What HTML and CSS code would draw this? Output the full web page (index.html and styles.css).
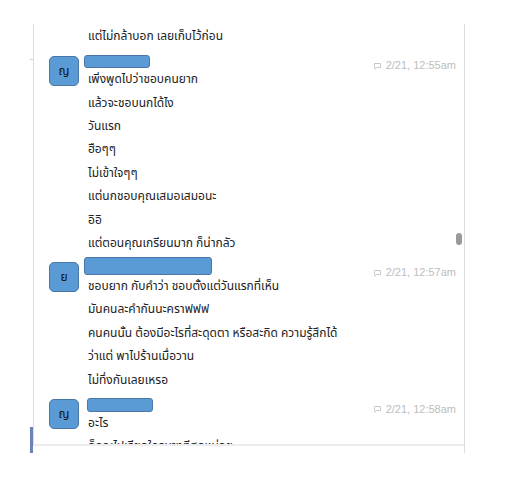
FILE: index.html
```html
<!DOCTYPE html>
<html lang="th">
<head>
<meta charset="utf-8">
<link rel="stylesheet" href="styles.css">
</head>
<body>
<div class="page">
  <div class="rail"><span class="tick"></span><span class="marker"></span></div>
  <div class="panel">
    <div class="frame">
      <div class="feed">
        <p class="msg">แต่ไม่กล้าบอก เลยเก็บไว้ก่อน</p>

        <div class="group">
          <div class="avatar">ญ</div>
          <div class="body">
            <div class="head">
              <span class="name n1"></span>
              <span class="time"><svg class="ico" width="7" height="7" viewBox="0 0 7 7"><path d="M0.5 0.5H6.5V4.5H2.5L1 6.3V4.5H0.5Z" fill="none" stroke="#c8c8c8" stroke-width="1"/></svg>2/21, 12:55am</span>
            </div>
            <p class="msg">เพิ่งพูดไปว่าชอบคนยาก</p>
            <p class="msg">แล้วจะชอบนกได้ไง</p>
            <p class="msg">วันแรก</p>
            <p class="msg">ฮือๆๆ</p>
            <p class="msg">ไม่เข้าใจๆๆ</p>
            <p class="msg">แต่นกชอบคุณเสมอเสมอนะ</p>
            <p class="msg">อิอิ</p>
            <p class="msg">แต่ตอนคุณเกรียนมาก ก็น่ากลัว</p>
          </div>
        </div>

        <div class="group">
          <div class="avatar">ย</div>
          <div class="body">
            <div class="head">
              <span class="name n2"></span>
              <span class="time"><svg class="ico" width="7" height="7" viewBox="0 0 7 7"><path d="M0.5 0.5H6.5V4.5H2.5L1 6.3V4.5H0.5Z" fill="none" stroke="#c8c8c8" stroke-width="1"/></svg>2/21, 12:57am</span>
            </div>
            <p class="msg">ชอบยาก กับคำว่า ชอบตั้งแต่วันแรกที่เห็น</p>
            <p class="msg">มันคนละคำกันนะคราฟฟฟ</p>
            <p class="msg">คนคนนั้น ต้องมีอะไรที่สะดุดตา หรือสะกิด ความรู้สึกได้</p>
            <p class="msg">ว่าแต่ พาไปร้านเมื่อวาน</p>
            <p class="msg">ไม่ทึ่งกันเลยเหรอ</p>
          </div>
        </div>

        <div class="group">
          <div class="avatar">ญ</div>
          <div class="body">
            <div class="head">
              <span class="name n3"></span>
              <span class="time"><svg class="ico" width="7" height="7" viewBox="0 0 7 7"><path d="M0.5 0.5H6.5V4.5H2.5L1 6.3V4.5H0.5Z" fill="none" stroke="#c8c8c8" stroke-width="1"/></svg>2/21, 12:58am</span>
            </div>
            <p class="msg">อะไร</p>
            <p class="msg">ก็คุณไปเรียกใครบางทีสุดหน่อย</p>
          </div>
        </div>
      </div>
      <div class="thumb"></div>
    </div>
  </div>
</div>
</body>
</html>
```

FILE: styles.css
```css
html, body {
  margin: 0;
  padding: 0;
  background: #ffffff;
}

body {
  font-family: Tahoma, "Noto Sans Thai", "Noto Sans", "DejaVu Sans", sans-serif;
  font-size: 12px;
  color: #222;
}

.page {
  display: flex;
  padding-top: 24px;
  padding-left: 30px;
}

.rail {
  width: 3px;
  height: 429px;
  display: flex;
  flex-direction: column;
}

.tick {
  display: block;
  margin-top: 35px;
  height: 1px;
  background: #cfcfcf;
}

.marker {
  display: block;
  margin-top: auto;
  height: 26px;
  background: #6b84b5;
}

.panel {
  width: 431px;
  height: 429px;
  border-right: 1px solid #dcdcdc;
}

.frame {
  position: relative;
  height: 420px;
  border-left: 1px solid #dcdcdc;
  border-bottom: 2px solid #ececec;
  overflow: hidden;
}

.feed {
  padding-top: 1.3px;
}

.msg {
  margin: 0 0 0 54px;
  height: 23.4px;
  line-height: 23.4px;
  white-space: nowrap;
}

.group .msg {
  margin-left: 0;
}

.group {
  display: flex;
  align-items: flex-start;
}

.avatar {
  box-sizing: border-box;
  width: 30px;
  height: 30px;
  margin-left: 15px;
  margin-top: 7px;
  background: #5b9bd5;
  border: 1px solid #4a77a6;
  border-radius: 5px;
  display: flex;
  align-items: center;
  justify-content: center;
  font-size: 12px;
  color: #111;
}

.body {
  flex: 1;
  margin-left: 9px;
  padding-right: 8px;
}

.head {
  height: 19.6px;
  display: flex;
  align-items: flex-end;
  justify-content: space-between;
}

.name {
  display: block;
  box-sizing: border-box;
  background: #5b9bd5;
  border: 1px solid #4a77a6;
  border-radius: 3px;
}

.n1 { width: 66px; height: 13px; margin-left: -4px; margin-bottom: 0; }
.n2 { width: 128px; height: 18px; margin-left: -4px; margin-bottom: 0; }
.n3 { width: 66px; height: 14px; margin-left: -1px; margin-bottom: 0; }

.time {
  display: flex;
  align-items: center;
  font-family: "Liberation Sans", Arial, sans-serif;
  font-size: 11px;
  line-height: 12px;
  color: #bdbdbd;
  margin-bottom: -3px;
}

.ico {
  margin-right: 5px;
  margin-top: 2px;
}

.thumb {
  position: absolute;
  left: 422px;
  top: 209px;
  width: 6px;
  height: 12px;
  border-radius: 3px;
  background: #9a9a9a;
}
```
